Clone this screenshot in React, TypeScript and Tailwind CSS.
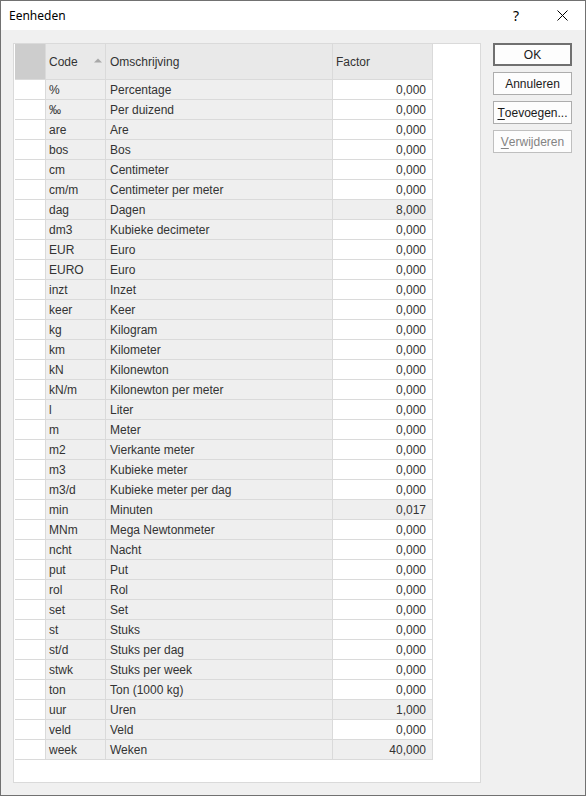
import React from 'react'

type Row = { code: string; desc: string; factor: string }

const rows: Row[] = [
  { code: '%', desc: 'Percentage', factor: '0,000' },
  { code: '‰', desc: 'Per duizend', factor: '0,000' },
  { code: 'are', desc: 'Are', factor: '0,000' },
  { code: 'bos', desc: 'Bos', factor: '0,000' },
  { code: 'cm', desc: 'Centimeter', factor: '0,000' },
  { code: 'cm/m', desc: 'Centimeter per meter', factor: '0,000' },
  { code: 'dag', desc: 'Dagen', factor: '8,000' },
  { code: 'dm3', desc: 'Kubieke decimeter', factor: '0,000' },
  { code: 'EUR', desc: 'Euro', factor: '0,000' },
  { code: 'EURO', desc: 'Euro', factor: '0,000' },
  { code: 'inzt', desc: 'Inzet', factor: '0,000' },
  { code: 'keer', desc: 'Keer', factor: '0,000' },
  { code: 'kg', desc: 'Kilogram', factor: '0,000' },
  { code: 'km', desc: 'Kilometer', factor: '0,000' },
  { code: 'kN', desc: 'Kilonewton', factor: '0,000' },
  { code: 'kN/m', desc: 'Kilonewton per meter', factor: '0,000' },
  { code: 'l', desc: 'Liter', factor: '0,000' },
  { code: 'm', desc: 'Meter', factor: '0,000' },
  { code: 'm2', desc: 'Vierkante meter', factor: '0,000' },
  { code: 'm3', desc: 'Kubieke meter', factor: '0,000' },
  { code: 'm3/d', desc: 'Kubieke meter per dag', factor: '0,000' },
  { code: 'min', desc: 'Minuten', factor: '0,017' },
  { code: 'MNm', desc: 'Mega Newtonmeter', factor: '0,000' },
  { code: 'ncht', desc: 'Nacht', factor: '0,000' },
  { code: 'put', desc: 'Put', factor: '0,000' },
  { code: 'rol', desc: 'Rol', factor: '0,000' },
  { code: 'set', desc: 'Set', factor: '0,000' },
  { code: 'st', desc: 'Stuks', factor: '0,000' },
  { code: 'st/d', desc: 'Stuks per dag', factor: '0,000' },
  { code: 'stwk', desc: 'Stuks per week', factor: '0,000' },
  { code: 'ton', desc: 'Ton (1000 kg)', factor: '0,000' },
  { code: 'uur', desc: 'Uren', factor: '1,000' },
  { code: 'veld', desc: 'Veld', factor: '0,000' },
  { code: 'week', desc: 'Weken', factor: '40,000' },
]

function DialogButton({ label, hotkey, primary, disabled }: { label: string; hotkey?: boolean; primary?: boolean; disabled?: boolean }) {
  const first = label.charAt(0)
  const rest = label.slice(1)
  return (
    <button
      className={
        'w-[79px] h-[23px] flex items-center justify-center bg-[#fdfdfd] text-[12px] ' +
        (primary ? 'border-2 border-[#707070] ' : 'border border-[#adadad] ') +
        (disabled ? 'text-[#838383] border-[#bfbfbf]' : 'text-[#1a1a1a]')
      }
    >
      {hotkey ? (
        <>
          <span className="underline underline-offset-2">{first}</span>
          {rest}
        </>
      ) : (
        label
      )}
    </button>
  )
}

export default function App() {
  return (
    <div className="w-[586px] h-[796px] border border-[#717171] bg-[#f0f0f0] flex flex-col font-['Liberation_Sans',Arial,sans-serif]">
      {/* title bar */}
      <div className="h-[29px] bg-white flex items-center shrink-0">
        <span className="ml-[8px] text-[12px] text-black font-['Noto_Sans',sans-serif]">Eenheden</span>
        <span className="ml-auto mr-[38px] text-[14px] text-black font-['Noto_Sans',sans-serif]">?</span>
        <svg width="11" height="11" viewBox="0 0 11 11" className="mr-[17px]">
          <path d="M0.5 0.5 L10.5 10.5 M10.5 0.5 L0.5 10.5" stroke="#000" strokeWidth="1" />
        </svg>
      </div>

      {/* body */}
      <div className="flex pl-[12px] pt-[13px] gap-[12px]">
        <div className="w-[468px] h-[740px] bg-white border border-[#dadada] pl-px text-[12px] text-[#333]">
          <div className="w-fit">
            {/* header */}
            <div className="flex h-[36px] border-b border-[#dadada]">
              <div className="w-[31px] bg-[#cdcdcd] border-r border-[#dadada]" />
              <div className="w-[60px] bg-[#e9e9e9] border-r border-[#dadada] flex items-center pl-[3px]">
                <span>Code</span>
                <svg width="8" height="5" viewBox="0 0 8 5" className="ml-auto mr-[3px] mb-[2px]">
                  <path d="M0 4.5 L4 0.5 L8 4.5 Z" fill="#a8a8a8" />
                </svg>
              </div>
              <div className="w-[227px] bg-[#e9e9e9] border-r border-[#dadada] flex items-center pl-[4px]">
                Omschrijving
              </div>
              <div className="w-[100px] bg-[#e9e9e9] border-r border-[#dadada] flex items-center pl-[3px]">
                Factor
              </div>
            </div>
            {rows.map((r) => (
              <div key={r.code} className="flex h-[20px] border-b border-[#dadada]">
                <div className="w-[31px] bg-white border-r border-[#dadada]" />
                <div className="w-[60px] bg-[#efefef] border-r border-[#dadada] flex items-center pl-[3px]">{r.code}</div>
                <div className="w-[227px] bg-[#efefef] border-r border-[#dadada] flex items-center pl-[4px]">{r.desc}</div>
                <div
                  className={
                    'w-[100px] border-r border-[#dadada] flex items-center justify-end pr-[6px] ' +
                    (r.factor === '0,000' ? 'bg-white' : 'bg-[#efefef]')
                  }
                >
                  {r.factor}
                </div>
              </div>
            ))}
          </div>
        </div>

        <div className="flex flex-col gap-[6px]">
          <DialogButton label="OK" primary />
          <DialogButton label="Annuleren" />
          <DialogButton label="Toevoegen..." hotkey />
          <DialogButton label="Verwijderen" hotkey disabled />
        </div>
      </div>
    </div>
  )
}
